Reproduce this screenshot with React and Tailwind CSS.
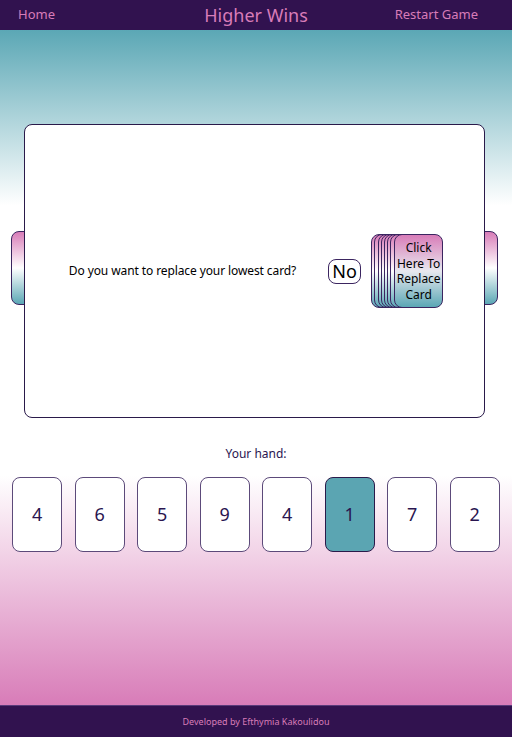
import React from "react";

const hand = [4, 6, 5, 9, 4, 1, 7, 2];

function SideCard({ side }) {
  return (
    <div
      className={`absolute top-[107px] w-[49px] h-[74px] rounded-[8px] border border-[#3b2560] bg-[linear-gradient(to_bottom,#d87cb8,#ffffff_50%,#5ba7b5)] ${
        side === "left" ? "left-[11px]" : "right-[14px]"
      }`}
    />
  );
}

export default function App() {
  const back = [0, 1, 2, 3, 4, 5, 6];
  return (
    <div className="w-[512px] flex flex-col" style={{ fontFamily: '"Noto Sans", sans-serif' }}>
      <header className="h-[30px] bg-[#31124f] flex items-center justify-between px-[18px] text-[#d87cb8]">
        <span className="text-[13px] w-[120px]">Home</span>
        <span className="text-[18px]">Higher Wins</span>
        <span className="text-[13px] w-[120px] text-right pr-[16px]">Restart Game</span>
      </header>
      <main className="h-[675px] bg-[linear-gradient(to_bottom,#5ba7b5_0%,#ffffff_26%,#ffffff_66%,#d87cb8_100%)] flex flex-col items-center">
        <div className="relative w-[512px] h-[294px] mt-[94px]">
          <SideCard side="left" />
          <SideCard side="right" />
          <div className="absolute left-[24px] top-0 w-[461px] h-[294px] bg-white border border-[#2a1a4a] rounded-[8px] flex items-center justify-center">
            <span className="ml-[3px] text-[12px] tracking-[-0.1px] text-black">Do you want to replace your lowest card?</span>
            <button className="ml-[32px] w-[33px] h-[25px] rounded-[8px] border border-[#3b2560] text-[18px] leading-none text-black flex items-center justify-center">
              No
            </button>
            <div className="relative ml-[10px] w-[72px] h-[74px]">
              {back.map((i) => (
                <div
                  key={i}
                  className="absolute top-0 w-[49px] h-[74px] rounded-[8px] border border-[#3b2560] bg-[linear-gradient(to_bottom,#d87cb8,#ffffff_50%,#5ba7b5)]"
                  style={{ left: i * 3.2 }}
                />
              ))}
              <div className="absolute top-0 left-[23px] w-[49px] h-[74px] rounded-[8px] border border-[#3b2560] bg-[linear-gradient(to_bottom,#d87cb8,#e8e8ef_50%,#5ba7b5)] flex items-center justify-center text-center text-[12px] leading-[15.5px] text-black">
                Click Here To Replace Card
              </div>
            </div>
          </div>
        </div>
        <p className="mt-[27px] text-[12px] text-[#2a1550]">Your hand:</p>
        <div className="mt-[14px] flex gap-[12.5px]">
          {hand.map((n, i) => (
            <div
              key={i}
              className={`w-[50px] h-[75px] rounded-[8px] border flex items-center justify-center text-[18px] text-[#2a1550] ${
                n === 1 ? "bg-[#5ba5b2] border-[#2a1a4a]" : "bg-white border-[#5c4a7a]"
              }`}
            >
              {n}
            </div>
          ))}
        </div>
      </main>
      <footer className="h-[32px] bg-[#31124f] border-t border-[#5a3a7a] flex items-center justify-center text-[9px] text-[#d87cb8]">
        Developed by Efthymia Kakoulidou
      </footer>
    </div>
  );
}
